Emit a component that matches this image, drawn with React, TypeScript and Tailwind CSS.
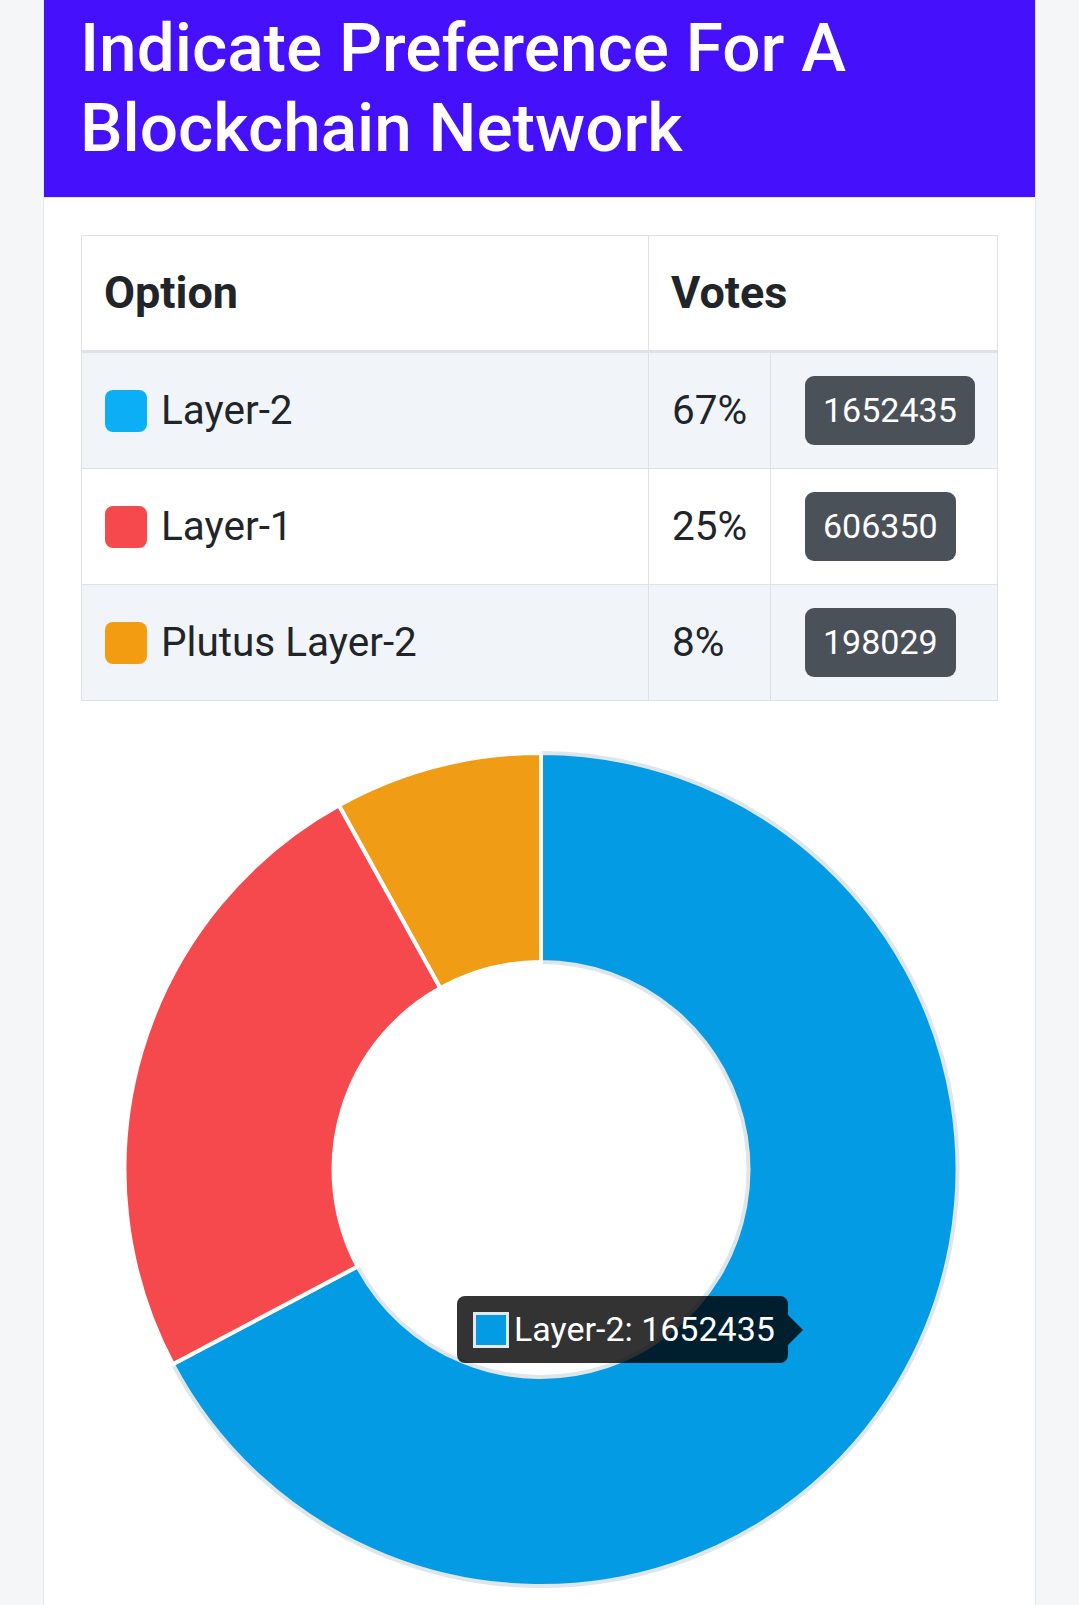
import React from "react";

const rows = [
  { label: "Layer-2", pct: "67%", votes: 1652435, square: "bg-[#0aaff5]", stripe: true },
  { label: "Layer-1", pct: "25%", votes: 606350, square: "bg-[#f5494e]", stripe: false },
  { label: "Plutus Layer-2", pct: "8%", votes: 198029, square: "bg-[#f39c12]", stripe: true },
];

const slices = [
  { value: 1652435, fill: "#049be5", stroke: "#dfe6eb" },
  { value: 606350, fill: "#f5494e", stroke: "#ffffff" },
  { value: 198029, fill: "#f19c15", stroke: "#ffffff" },
];

function arcPath(cx: number, cy: number, r0: number, r1: number, a0: number, a1: number) {
  const rad = (d: number) => (d * Math.PI) / 180;
  const pt = (r: number, a: number) => [cx + r * Math.cos(rad(a)), cy + r * Math.sin(rad(a))];
  const large = a1 - a0 > 180 ? 1 : 0;
  const [x0, y0] = pt(r1, a0);
  const [x1, y1] = pt(r1, a1);
  const [x2, y2] = pt(r0, a1);
  const [x3, y3] = pt(r0, a0);
  return `M${x0} ${y0} A${r1} ${r1} 0 ${large} 1 ${x1} ${y1} L${x2} ${y2} A${r0} ${r0} 0 ${large} 0 ${x3} ${y3} Z`;
}

function Doughnut() {
  const total = slices.reduce((s, d) => s + d.value, 0);
  let start = -90;
  const cx = 460;
  const cy = 449.5;
  return (
    <svg width="917" height="900" viewBox="0 0 917 900" className="block">
      {slices.map((s, i) => {
        const sweep = (s.value / total) * 360;
        const d = arcPath(cx, cy, 207.5, 416.5, start, start + sweep);
        start += sweep;
        return <path key={i} d={d} fill={s.fill} stroke={s.stroke} strokeWidth={4} strokeLinejoin="round" />;
      })}
    </svg>
  );
}

export default function App() {
  return (
    <div className="min-h-screen bg-[#f4f6f8] px-[43px] font-['Roboto',sans-serif]">
      <div className="bg-white border-x border-[#e3e6ea] pb-[40px]">
        {/* Header */}
        <div className="bg-[#4510fb] h-[198px] pt-[8px] pl-[36px] border-b border-[#e9e4ff]">
          <h1 className="text-white text-[67.5px] leading-[80px] font-medium">
            Indicate Preference For A Blockchain Network
          </h1>
        </div>

        {/* Votes table */}
        <div className="mx-[37px] mt-[37px] border border-[#dee2e6] text-[#212529]">
          <div className="grid grid-cols-[567px_1fr] h-[117px] border-b-[3px] border-[#dee2e6] text-[45px] font-bold">
            <div className="flex items-center pl-[22px] border-r border-[#dee2e6]">Option</div>
            <div className="flex items-center pl-[22px]">Votes</div>
          </div>
          {rows.map((r, i) => (
            <div
              key={r.label}
              className={`grid grid-cols-[567px_122px_1fr] text-[40.5px] ${
                i < rows.length - 1 ? "h-[116px] border-b border-[#dee2e6]" : "h-[115px]"
              } ${r.stripe ? "bg-[#f1f5f9]" : "bg-white"}`}
            >
              <div className="flex items-center pl-[23px] gap-[14px] border-r border-[#dee2e6]">
                <span className={`w-[42px] h-[42px] rounded-[8px] ${r.square}`} />
                <span>{r.label}</span>
              </div>
              <div className="flex items-center pl-[23px] border-r border-[#dee2e6]">{r.pct}</div>
              <div className="flex items-center pl-[34px]">
                <span className="h-[69px] px-[18px] flex items-center rounded-[9px] bg-[#4b5159] text-white text-[34px]">
                  {r.votes}
                </span>
              </div>
            </div>
          ))}
        </div>

        {/* Chart */}
        <div className="relative mx-[37px] mt-[19px]">
          <Doughnut />
          <div className="absolute left-[376px] top-[576px] w-[331px] h-[67px] rounded-[8px] bg-black/80 flex items-center pl-[16px] gap-[5px]">
            <span className="w-[36px] h-[36px] border-[3px] border-[#e3e9ee] bg-[#049be5]" />
            <span className="text-white text-[34px]">Layer-2: 1652435</span>
            <span className="absolute right-[-15px] top-1/2 -translate-y-1/2 border-y-[15px] border-y-transparent border-l-[15px] border-l-black/80" />
          </div>
        </div>
      </div>
    </div>
  );
}
